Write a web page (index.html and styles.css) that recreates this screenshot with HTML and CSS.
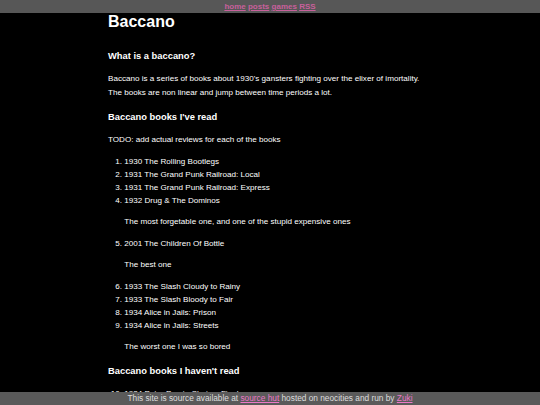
FILE: index.html
```html
<!DOCTYPE html>
<html lang="en">
<head>
  <meta charset="UTF-8" />
  <meta name="viewport" content="width=device-width, initial-scale=1.0"/>
  <title>Baccano</title>
  <link rel="stylesheet" href="styles.css">
</head>
<body>

<!-- Navigation -->
<nav>
  <a href="#">home</a>
  <a href="#">posts</a>
  <a href="#">games</a>
  <a href="#">RSS</a>
</nav>

<main>
  <h1>Baccano</h1>

  <h3>What is a baccano?</h3>
  <p>Baccano is a series of books about 1930's gansters fighting over the elixer of imortality.<br>
  The books are non linear and jump between time periods a lot.</p>

  <h3>Baccano books I've read</h3>
  <p>TODO: add actual reviews for each of the books</p>
  <ol>
    <li>1930 The Rolling Bootlegs</li>
    <li>1931 The Grand Punk Railroad: Local</li>
    <li>1931 The Grand Punk Railroad: Express</li>
    <li>1932 Drug &amp; The Dominos
      <p>The most forgetable one, and one of the stupid expensive ones</p>
    </li>
    <li>2001 The Children Of Bottle
      <p>The best one</p>
    </li>
    <li>1933 The Slash Cloudy to Rainy</li>
    <li>1933 The Slash Bloody to Fair</li>
    <li>1934 Alice in Jails: Prison</li>
    <li>1934 Alice in Jails: Streets
      <p>The worst one I was so bored</p>
    </li>
  </ol>

  <h3>Baccano books I haven't read</h3>
  <ol start="10">
    <li>1934 Peter Pan in Chains: Final</li>
    <li>1934 Peter Pan in Chains: Sunrise</li>
    <li>1935 Summer Bullet: Dropout</li>
  </ol>
</main>

<footer>
  This site is source available at <a href="#">source hut</a> hosted on neocities and run by <a href="#">Zuki</a>
</footer>

</body>
</html>
```

FILE: styles.css
```css
body { font-family: "Liberation Sans", Arial, sans-serif; font-size: 8.1px; margin: 0; padding: 0; background: #000; color: #fff; }
nav { background: #575757; height: 13px; line-height: 13px; text-align: center; font-weight: bold; font-size: 8px; }
nav a { color: #c8609c; }
main { width: 60%; margin: 0 auto; padding-bottom: 20px; }
h1 { font-size: 16px; margin: 0 0 18px; line-height: normal; }
h3 { font-size: 9.36px; line-height: 1.5; margin: 9.36px 0; }
p { line-height: 14px; margin: 8px 0; }
ol { padding-left: 2em; margin: 8px 0; }
li { line-height: 13px; }
footer { position: fixed; bottom: 0; left: 0; right: 0; height: 13px; line-height: 13px; background: #5a5a5a; color: #ddd; text-align: center; font-size: 8.3px; }
footer a { color: #ec78c8; }
```
